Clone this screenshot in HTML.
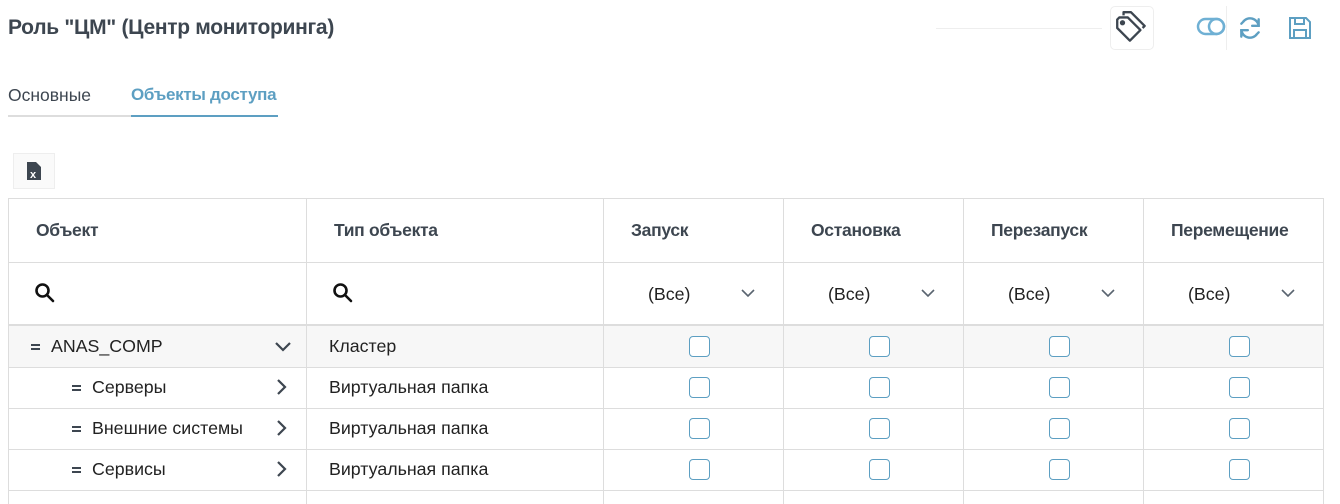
<!DOCTYPE html>
<html><head><meta charset="utf-8"><style>
*{box-sizing:border-box;margin:0;padding:0}
body{width:1340px;height:504px;overflow:hidden;background:#fff;font-family:"Liberation Sans",sans-serif;color:#222;position:relative}
.a{position:absolute;white-space:nowrap}
.title{left:8px;top:16px;font-size:21px;font-weight:bold;color:#3d4650;letter-spacing:-0.3px}
.tab{top:85px;font-size:17.5px}
.hl{background:#ddd;height:1px}
.vl{background:#ddd;width:1px}
.hd{top:220px;font-size:17.5px;font-weight:bold;color:#3d4650;letter-spacing:-0.3px}
.txt{font-size:17.8px;color:#222}
.cb{width:21px;height:21px;border:1.5px solid #5d9fc2;border-radius:4px;background:#fff}
</style></head><body>
<div class="a title">Роль "ЦМ" (Центр мониторинга)</div>
<div class="a hl" style="left:936px;top:28px;width:166px;background:#eee"></div>
<div class="a" style="left:1110px;top:6px;width:44px;height:44px;border:1px solid #eee;border-radius:5px"></div>
<svg class="a" style="left:1113px;top:9px" width="38" height="38" viewBox="0 0 36 36" fill="none" stroke="#3d4650" stroke-width="2.2" stroke-linejoin="round">
<path d="M4 10 V18 L16 30 L26 20 L14 8 H6 Z"/>
<path d="M10 6 V3 H17 L30 16 L28 18"/>
<circle cx="9" cy="13" r="1.4" fill="#3d4650"/>
</svg>
<div class="a vl" style="left:1226px;top:6px;height:44px;background:#eee"></div>
<svg class="a" style="left:1196px;top:17px" width="32" height="20" viewBox="0 0 32 20" fill="none" stroke="#6fb0d4" stroke-width="2.5"><rect x="2" y="2" width="26" height="15" rx="7.5"/><circle cx="20.5" cy="9.5" r="7.5"/></svg>
<svg class="a" style="left:1237px;top:15px" width="26" height="26" viewBox="0 0 24 24" fill="none" stroke="#5d9fc2" stroke-width="2.2" stroke-linecap="round"><path d="M20 10A8 8 0 0 0 5.5 6.5L4 8"/><path d="M4 14A8 8 0 0 0 18.5 17.5L20 16"/><path d="M20 4V10H14" /><path d="M4 20V14H10"/></svg>
<svg class="a" style="left:1288px;top:16px" width="24" height="24" viewBox="0 0 24 24" fill="none" stroke="#5d9fc2" stroke-width="2"><path d="M2 2H18L22 6V22H2Z"/><path d="M7 2V8H16V2"/><path d="M6 22V14H18V22"/></svg>

<div class="a tab" style="left:8px;color:#3d4650">Основные</div>
<div class="a tab" style="left:131px;color:#5d9fc2;font-weight:bold;letter-spacing:-0.3px;font-size:17px">Объекты доступа</div>
<div class="a" style="left:8px;top:115px;width:123px;height:2px;background:#ddd"></div>
<div class="a" style="left:131px;top:115px;width:147px;height:2px;background:#5d9fc2"></div>

<div class="a" style="left:13px;top:153px;width:42px;height:36px;background:#fafafa;border:1px solid #eee"></div>
<svg class="a" style="left:27px;top:162px" width="14" height="18" viewBox="0 0 14 18"><path d="M0 0H9L14 5V18H0Z" fill="#3d4650"/><text x="3" y="16" font-size="11" font-weight="bold" fill="#fff" font-family="Liberation Sans">x</text></svg>

<div class="a" style="left:8px;top:326px;width:1315px;height:41px;background:#f7f7f7"></div>
<div class="a hl" style="left:8px;top:198px;width:1316px"></div>
<div class="a hl" style="left:8px;top:262px;width:1316px"></div>
<div class="a hl" style="left:8px;top:324px;width:1316px;height:2px"></div>
<div class="a hl" style="left:8px;top:367px;width:1316px"></div>
<div class="a hl" style="left:8px;top:408px;width:1316px"></div>
<div class="a hl" style="left:8px;top:449px;width:1316px"></div>
<div class="a hl" style="left:8px;top:490px;width:1316px"></div>
<div class="a vl" style="left:8px;top:198px;height:306px"></div>
<div class="a vl" style="left:306px;top:198px;height:306px"></div>
<div class="a vl" style="left:603px;top:198px;height:306px"></div>
<div class="a vl" style="left:783px;top:198px;height:306px"></div>
<div class="a vl" style="left:963px;top:198px;height:306px"></div>
<div class="a vl" style="left:1143px;top:198px;height:306px"></div>
<div class="a vl" style="left:1323px;top:198px;height:306px"></div>

<div class="a hd" style="left:36px">Объект</div>
<div class="a hd" style="left:334px">Тип объекта</div>
<div class="a hd" style="left:631px">Запуск</div>
<div class="a hd" style="left:811px">Остановка</div>
<div class="a hd" style="left:991px">Перезапуск</div>
<div class="a hd" style="left:1171px">Перемещение</div>

<svg class="a" style="left:34px;top:282px" width="22" height="22" viewBox="0 0 22 22" fill="none" stroke="#111" stroke-width="2.6"><circle cx="8.5" cy="8.5" r="6"/><path d="M13 13L19 19" stroke-linecap="round"/></svg>
<svg class="a" style="left:332px;top:282px" width="22" height="22" viewBox="0 0 22 22" fill="none" stroke="#111" stroke-width="2.6"><circle cx="8.5" cy="8.5" r="6"/><path d="M13 13L19 19" stroke-linecap="round"/></svg>

<div class="a txt" style="left:648px;top:284px">(Все)</div>
<div class="a txt" style="left:828px;top:284px">(Все)</div>
<div class="a txt" style="left:1008px;top:284px">(Все)</div>
<div class="a txt" style="left:1188px;top:284px">(Все)</div>
<svg class="a" style="left:741px;top:288px" width="14" height="10" viewBox="0 0 14 10" fill="none" stroke="#5a6470" stroke-width="1.6"><path d="M1 2L7 8L13 2"/></svg>
<svg class="a" style="left:921px;top:288px" width="14" height="10" viewBox="0 0 14 10" fill="none" stroke="#5a6470" stroke-width="1.6"><path d="M1 2L7 8L13 2"/></svg>
<svg class="a" style="left:1101px;top:288px" width="14" height="10" viewBox="0 0 14 10" fill="none" stroke="#5a6470" stroke-width="1.6"><path d="M1 2L7 8L13 2"/></svg>
<svg class="a" style="left:1281px;top:288px" width="14" height="10" viewBox="0 0 14 10" fill="none" stroke="#5a6470" stroke-width="1.6"><path d="M1 2L7 8L13 2"/></svg>

<div class="a" style="left:31px;top:344px;width:9px;height:2px;background:#3d4650"></div><div class="a" style="left:31px;top:348px;width:9px;height:2px;background:#3d4650"></div>
<div class="a txt" style="left:51px;top:336px">ANAS_COMP</div>
<svg class="a" style="left:274px;top:341px" width="18" height="12" viewBox="0 0 18 12" fill="none" stroke="#3d4650" stroke-width="2.2"><path d="M2 2L9 9L16 2"/></svg>
<div class="a txt" style="left:329px;top:336px">Кластер</div>

<div class="a" style="left:72px;top:385px;width:9px;height:2px;background:#3d4650"></div><div class="a" style="left:72px;top:389px;width:9px;height:2px;background:#3d4650"></div>
<div class="a txt" style="left:92px;top:377px">Серверы</div>
<svg class="a" style="left:276px;top:378px" width="12" height="18" viewBox="0 0 12 18" fill="none" stroke="#3d4650" stroke-width="2.2"><path d="M2 2L9 9L2 16"/></svg>
<div class="a txt" style="left:329px;top:377px">Виртуальная папка</div>

<div class="a" style="left:72px;top:426px;width:9px;height:2px;background:#3d4650"></div><div class="a" style="left:72px;top:430px;width:9px;height:2px;background:#3d4650"></div>
<div class="a txt" style="left:92px;top:418px">Внешние системы</div>
<svg class="a" style="left:276px;top:419px" width="12" height="18" viewBox="0 0 12 18" fill="none" stroke="#3d4650" stroke-width="2.2"><path d="M2 2L9 9L2 16"/></svg>
<div class="a txt" style="left:329px;top:418px">Виртуальная папка</div>

<div class="a" style="left:72px;top:467px;width:9px;height:2px;background:#3d4650"></div><div class="a" style="left:72px;top:471px;width:9px;height:2px;background:#3d4650"></div>
<div class="a txt" style="left:92px;top:459px">Сервисы</div>
<svg class="a" style="left:276px;top:460px" width="12" height="18" viewBox="0 0 12 18" fill="none" stroke="#3d4650" stroke-width="2.2"><path d="M2 2L9 9L2 16"/></svg>
<div class="a txt" style="left:329px;top:459px">Виртуальная папка</div>

<div class="a cb" style="left:689px;top:336px"></div><div class="a cb" style="left:869px;top:336px"></div><div class="a cb" style="left:1049px;top:336px"></div><div class="a cb" style="left:1229px;top:336px"></div>
<div class="a cb" style="left:689px;top:377px"></div><div class="a cb" style="left:869px;top:377px"></div><div class="a cb" style="left:1049px;top:377px"></div><div class="a cb" style="left:1229px;top:377px"></div>
<div class="a cb" style="left:689px;top:418px"></div><div class="a cb" style="left:869px;top:418px"></div><div class="a cb" style="left:1049px;top:418px"></div><div class="a cb" style="left:1229px;top:418px"></div>
<div class="a cb" style="left:689px;top:459px"></div><div class="a cb" style="left:869px;top:459px"></div><div class="a cb" style="left:1049px;top:459px"></div><div class="a cb" style="left:1229px;top:459px"></div>
</body></html>
